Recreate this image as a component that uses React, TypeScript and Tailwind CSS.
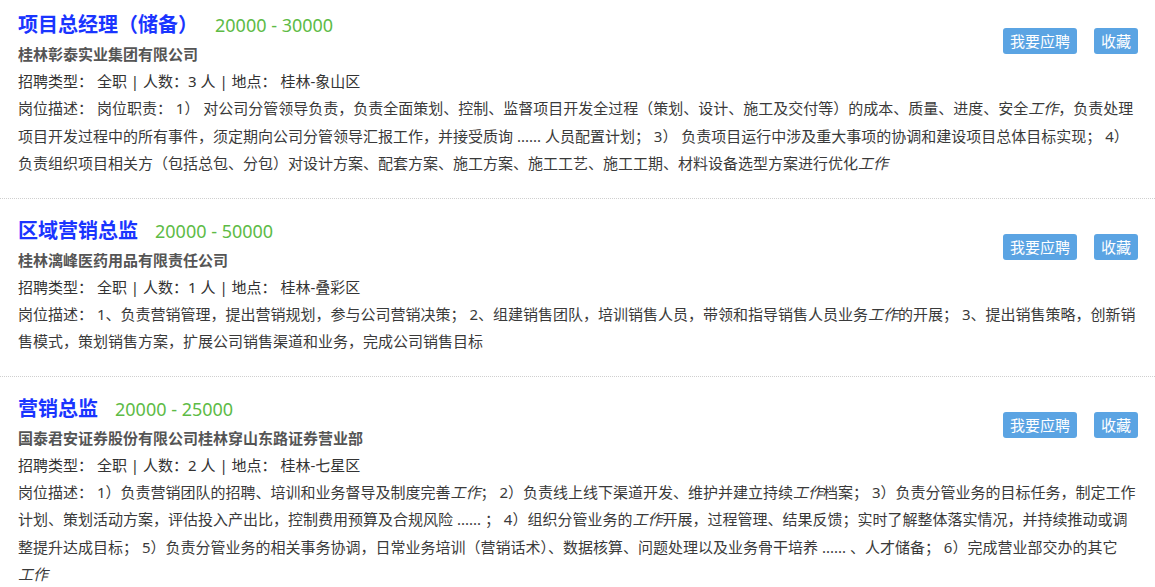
import type { ReactNode } from 'react';

interface Job {
  id: number;
  title: string;
  salary: string;
  company: string;
  type: string;
  count: number;
  location: string;
  desc: ReactNode;
}

// highlighted keyword, kept together like the original listing
const Kw = () => <em className="inline-block">工作</em>;

const jobs: Job[] = [
  {
    id: 1,
    title: '项目总经理（储备）',
    salary: '20000 - 30000',
    company: '桂林彰泰实业集团有限公司',
    type: '全职',
    count: 3,
    location: '桂林-象山区',
    desc: (
      <>
        岗位职责： 1） 对公司分管领导负责，负责全面策划、控制、监督项目开发全过程（策划、设计、施工及交付等）的成本、质量、进度、安全
        <Kw />
        ，负责处理项目开发过程中的所有事件，须定期向公司分管领导汇报工作，并接受质询 ...... 人员配置计划； 3）
        负责项目运行中涉及重大事项的协调和建设项目总体目标实现； 4）
        负责组织项目相关方（包括总包、分包）对设计方案、配套方案、施工方案、施工工艺、施工工期、材料设备选型方案进行优化
        <Kw />
      </>
    ),
  },
  {
    id: 2,
    title: '区域营销总监',
    salary: '20000 - 50000',
    company: '桂林漓峰医药用品有限责任公司',
    type: '全职',
    count: 1,
    location: '桂林-叠彩区',
    desc: (
      <>
        1、负责营销管理，提出营销规划，参与公司营销决策； 2、组建销售团队，培训销售人员，带领和指导销售人员业务
        <Kw />
        的开展； 3、提出销售策略，创新销售模式，策划销售方案，扩展公司销售渠道和业务，完成公司销售目标
      </>
    ),
  },
  {
    id: 3,
    title: '营销总监',
    salary: '20000 - 25000',
    company: '国泰君安证券股份有限公司桂林穿山东路证券营业部',
    type: '全职',
    count: 2,
    location: '桂林-七星区',
    desc: (
      <>
        1）负责营销团队的招聘、培训和业务督导及制度完善<Kw />； 2）负责线上线下渠道开发、维护并建立持续
        <Kw />
        档案； 3）负责分管业务的目标任务，制定工作计划、策划活动方案，评估投入产出比，控制费用预算及合规风险 ...... ；
        4）组织分管业务的<Kw />
        开展，过程管理、结果反馈；实时了解整体落实情况，并持续推动或调整提升达成目标； 5）负责分管业务的相关事务协调，日常业务培训（营销话术）、数据核算、问题处理以及业务骨干培养
        ...... 、人才储备； 6）完成营业部交办的其它<Kw />
      </>
    ),
  },
];

function JobItem({ job, first }: { job: Job; first: boolean }) {
  return (
    <div
      className={
        first
          ? 'border-b border-dotted border-[#cfcfcf] pl-[18px] pr-[17px] pt-[10px] pb-[20px]'
          : 'border-b border-dotted border-[#cfcfcf] pl-[18px] pr-[17px] pt-[17px] pb-[20px]'
      }
    >
      <div className="flex items-start justify-between">
        <div>
          <div className="flex items-baseline h-[30px] leading-[30px]">
            <h2 className="text-[20px] font-bold text-[#1a35ff]">{job.title}</h2>
            <span className="ml-[17px] text-[18px] text-[#5dbb46]">{job.salary}</span>
          </div>
          <p className="text-[15px] leading-[28px] font-bold text-[#555]">{job.company}</p>
        </div>
        <div className="flex gap-[17px] mt-[18px]">
          <button className="h-[26px] px-[7px] rounded-[3px] bg-[#5ba4e3] text-white text-[15px] leading-[26px]">
            我要应聘
          </button>
          <button className="h-[26px] px-[7px] rounded-[3px] bg-[#5ba4e3] text-white text-[15px] leading-[26px]">
            收藏
          </button>
        </div>
      </div>
      <p className="text-[15px] leading-[27px] text-[#333]">
        招聘类型： {job.type} | 人数：{job.count} 人 | 地点： {job.location}
      </p>
      <p className="text-[15px] leading-[27.5px] text-[#3a3a3a]">
        岗位描述： {job.desc}
      </p>
    </div>
  );
}

export default function App() {
  return (
    <div className="min-h-screen bg-white font-['Noto_Sans','Noto_Sans_CJK_SC',sans-serif]">
      {jobs.map((job, i) => (
        <JobItem key={job.id} job={job} first={i === 0} />
      ))}
    </div>
  );
}
